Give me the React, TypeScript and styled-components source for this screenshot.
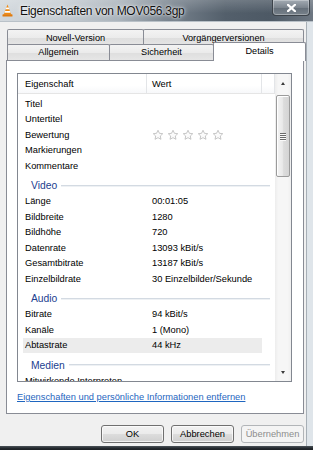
import React from 'react';
import styled, { createGlobalStyle } from 'styled-components';

const GlobalStyle = createGlobalStyle`
  html, body {
    margin: 0;
    padding: 0;
    width: 313px;
    height: 450px;
    overflow: hidden;
    background: #f0f0f0;
  }
  body {
    font-family: 'Liberation Sans', Arial, sans-serif;
    color: #000;
  }
`;

const Window = styled.div`
  width: 313px;
  height: 450px;
  display: flex;
  flex-direction: column;
  background: #f0f0f0;
`;

const TitleBar = styled.div`
  height: 22px;
  flex: none;
  display: flex;
  align-items: flex-start;
  background:
    linear-gradient(180deg, rgba(255, 255, 255, 0.18) 0%, rgba(255, 255, 255, 0) 60%),
    linear-gradient(90deg, #d2d8dd 0%, #c5ccd2 20%, #aab3bb 38%, #75808b 55%, #535f6b 72%, #4d5965 86%, #6d7782 100%);
  box-shadow: inset 0 -1px 0 #b9c1c8;
`;

const AppIcon = styled.svg`
  width: 11px;
  height: 13px;
  margin: 4px 0 0 2px;
  flex: none;
`;

const Caption = styled.div`
  margin: 4px 0 0 7px;
  font-size: 12px;
  letter-spacing: -0.3px;
  line-height: 14px;
  color: #101010;
  text-shadow: 0 0 5px rgba(255, 255, 255, 0.95), 0 0 2px rgba(255, 255, 255, 0.9);
  white-space: nowrap;
`;

const CloseButton = styled.div`
  margin: 0 3px 0 auto;
  width: 38px;
  height: 16px;
  box-sizing: border-box;
  display: flex;
  align-items: center;
  justify-content: center;
  border: 1px solid #3c434a;
  border-top: none;
  border-radius: 0 0 4px 4px;
  background: linear-gradient(180deg, #a3abb3 0%, #7c858e 50%, #66707a 55%, #77818a 100%);
  box-shadow: inset 0 0 0 1px rgba(255, 255, 255, 0.3);
`;

const Body = styled.div`
  flex: 1;
  display: flex;
  flex-direction: column;
  padding: 7px 9px 0 6px;
  box-shadow: inset -6px 0 0 #dfe5ea, inset -7px 0 0 #a7afb6;
`;

const TabRow = styled.div<{ $h: number }>`
  display: flex;
  align-items: flex-end;
  height: ${p => p.$h}px;
  padding-left: 1px;
`;

const Tab = styled.div<{ $w: number; $active?: boolean; $back?: boolean }>`
  width: ${p => p.$w}px;
  height: ${p => (p.$active ? 19 : p.$back ? 17 : 16)}px;
  margin-left: -1px;
  margin-bottom: ${p => (p.$active ? -1 : p.$back ? -1 : 0)}px;
  box-sizing: border-box;
  flex: none;
  display: flex;
  justify-content: center;
  align-items: ${p => (p.$active ? 'flex-start' : 'center')};
  padding-top: ${p => (p.$active ? 3 : 0)}px;
  border: 1px solid #898c95;
  border-bottom: none;
  border-radius: 2px 2px 0 0;
  background: ${p => (p.$active ? '#fff' : 'linear-gradient(180deg, #f3f3f3 0%, #ebebeb 50%, #dedede 51%, #e6e6e6 100%)')};
  font-size: 9.2px;
  line-height: 11px;
  position: relative;
  z-index: ${p => (p.$active ? 2 : 1)};

  &:first-child {
    margin-left: 0;
  }
`;

const Panel = styled.div`
  height: 354px;
  box-sizing: border-box;
  border: 1px solid #898c95;
  background: #fff;
  padding: 12px 11px 0 10px;
  display: flex;
  flex-direction: column;
`;

const List = styled.div`
  height: 309px;
  box-sizing: border-box;
  border: 1px solid #828790;
  display: flex;
  overflow: hidden;
  background: #fff;
`;

const ListMain = styled.div`
  flex: 1;
  display: flex;
  flex-direction: column;
  overflow: hidden;
`;

const Header = styled.div`
  height: 20px;
  flex: none;
  box-sizing: border-box;
  display: flex;
  border-bottom: 1px solid #e5e5e5;
  background: linear-gradient(180deg, #ffffff 0%, #ffffff 60%, #f7f8fa 100%);
  font-size: 9.3px;
`;

const HeaderCell = styled.div<{ $w?: number }>`
  width: ${p => (p.$w ? `${p.$w}px` : 'auto')};
  flex: ${p => (p.$w ? 'none' : '1')};
  box-sizing: border-box;
  display: flex;
  align-items: center;
  padding-left: ${p => (p.$w === 129 ? 7 : 5)}px;
  border-right: 1px solid #e3e5e8;
`;

const Rows = styled.div`
  flex: 1;
  overflow: hidden;
  padding-top: 2px;
  font-size: 9.3px;
`;

const Row = styled.div<{ $hot?: boolean }>`
  height: 15.5px;
  width: 239px;
  margin-left: 5px;
  display: flex;
  align-items: center;
  background: ${p => (p.$hot ? '#ececec' : 'transparent')};
  white-space: nowrap;
`;

const NameCell = styled.div`
  width: 124px;
  flex: none;
  padding-left: 2px;
  box-sizing: border-box;
  overflow: hidden;
`;

const ValueCell = styled.div`
  flex: 1;
  padding-left: 5px;
  display: flex;
  align-items: center;
`;

const GroupHead = styled.div`
  height: 20px;
  width: 247px;
  margin-left: 5px;
  box-sizing: border-box;
  display: flex;
  align-items: center;
  padding: 4px 0 0 8px;
  font-size: 10.3px;
  color: #22408f;
`;

const GroupLine = styled.div`
  flex: 1;
  height: 0;
  margin-left: 4px;
  border-top: 1px solid #d3dae2;
  border-bottom: 1px solid #eef1f4;
`;

const Stars = styled.div`
  display: flex;
  gap: 3px;
`;

const ScrollBar = styled.div`
  width: 16px;
  flex: none;
  display: flex;
  flex-direction: column;
  align-items: center;
  background: linear-gradient(90deg, #ededed 0%, #f6f6f6 20%, #f6f6f6 80%, #eeeeee 100%);
`;

const ArrowButton = styled.div<{ $h: number }>`
  height: ${p => p.$h}px;
  width: 100%;
  flex: none;
  display: flex;
  align-items: center;
  justify-content: center;
`;

const Arrow = styled.div<{ $up?: boolean }>`
  width: 0;
  height: 0;
  border-left: 2.5px solid transparent;
  border-right: 2.5px solid transparent;
  ${p => (p.$up ? 'border-bottom: 3px solid #3a3a3a;' : 'border-top: 3px solid #3a3a3a;')}
`;

const Thumb = styled.div`
  margin-top: 2px;
  width: 14px;
  height: 82px;
  box-sizing: border-box;
  border: 1px solid #9b9b9b;
  border-radius: 2px;
  background: linear-gradient(90deg, #f4f4f4 0%, #e9e9e9 45%, #dcdcdc 55%, #d4d4d4 100%);
  box-shadow: inset 1px 1px 0 #fff;
  display: flex;
  flex-direction: column;
  align-items: center;
  justify-content: center;
  gap: 1px;
`;

const Grip = styled.div`
  width: 6px;
  height: 1px;
  background: #6b6b6b;
  box-shadow: 0 1px 0 #fafafa;
`;

const Track = styled.div`
  flex: 1;
`;

const RemoveLink = styled.a`
  margin-top: 9px;
  font-size: 9.3px;
  line-height: 12px;
  color: #1f66c0;
  text-decoration: underline;
  white-space: nowrap;
  cursor: pointer;
`;

const ButtonBar = styled.div`
  display: flex;
  justify-content: flex-end;
  gap: 7px;
  margin-top: 11px;
`;

const Button = styled.div<{ $disabled?: boolean }>`
  width: 63px;
  height: 18px;
  box-sizing: border-box;
  display: flex;
  align-items: center;
  justify-content: center;
  font-size: 9.3px;
  color: ${p => (p.$disabled ? '#8d8d8d' : '#000')};
  border: 1px solid ${p => (p.$disabled ? '#b2b5b8' : '#707070')};
  border-radius: 3px;
  background: ${p =>
    p.$disabled
      ? '#f4f4f4'
      : 'linear-gradient(180deg, #f2f2f2 0%, #ebebeb 48%, #dddddd 50%, #cfcfcf 100%)'};
  box-shadow: inset 0 0 0 1px ${p => (p.$disabled ? '#f4f4f4' : 'rgba(255,255,255,0.7)')};
`;

const BottomFrame = styled.div`
  height: 4px;
  flex: none;
  background: linear-gradient(180deg, #4b5259 0%, #23282d 60%, #1c2024 100%);
`;

const StarIcon = () => (
  <svg width="12" height="12" viewBox="0 0 24 24">
    <path
      d="M12 2.5l2.9 6.1 6.6.8-4.9 4.6 1.3 6.6L12 17.3l-5.9 3.3 1.3-6.6-4.9-4.6 6.6-.8z"
      fill="#fbfbfb"
      stroke="#b9b9b9"
      strokeWidth="1.6"
      strokeLinejoin="round"
    />
  </svg>
);

type Prop = { name: string; value?: string; stars?: boolean; hot?: boolean };

const groups: { title?: string; rows: Prop[] }[] = [
  {
    rows: [
      { name: 'Titel' },
      { name: 'Untertitel' },
      { name: 'Bewertung', stars: true },
      { name: 'Markierungen' },
      { name: 'Kommentare' },
    ],
  },
  {
    title: 'Video',
    rows: [
      { name: 'Länge', value: '00:01:05' },
      { name: 'Bildbreite', value: '1280' },
      { name: 'Bildhöhe', value: '720' },
      { name: 'Datenrate', value: '13093 kBit/s' },
      { name: 'Gesamtbitrate', value: '13187 kBit/s' },
      { name: 'Einzelbildrate', value: '30 Einzelbilder/Sekunde' },
    ],
  },
  {
    title: 'Audio',
    rows: [
      { name: 'Bitrate', value: '94 kBit/s' },
      { name: 'Kanäle', value: '1 (Mono)' },
      { name: 'Abtastrate', value: '44 kHz', hot: true },
    ],
  },
  {
    title: 'Medien',
    rows: [{ name: 'Mitwirkende Interpreten' }],
  },
];

export default function App() {
  return (
    <Window>
      <GlobalStyle />
      <TitleBar>
        <AppIcon viewBox="0 0 11 13">
          <path d="M5.5 0.5 L9.2 10.5 H1.8 Z" fill="#f08a12" />
          <path d="M4.3 3.6 H6.7 L7.3 5.3 H3.7 Z" fill="#fff" />
          <path d="M3.1 7 H7.9 L8.5 8.7 H2.5 Z" fill="#fff" />
          <rect x="0.5" y="10.3" width="10" height="2.2" rx="0.6" fill="#e07a0c" />
        </AppIcon>
        <Caption>Eigenschaften von MOV056.3gp</Caption>
        <CloseButton>
          <svg width="9" height="8" viewBox="0 0 9 8">
            <path d="M1 0.8 L8 7.2 M8 0.8 L1 7.2" stroke="#fff" strokeWidth="2.2" strokeLinecap="square" />
          </svg>
        </CloseButton>
      </TitleBar>

      <Body>
        <TabRow $h={16}>
          <Tab $w={137} $back>Novell-Version</Tab>
          <Tab $w={161} $back>Vorgängerversionen</Tab>
        </TabRow>
        <TabRow $h={15}>
          <Tab $w={103}>Allgemein</Tab>
          <Tab $w={105}>Sicherheit</Tab>
          <Tab $w={93} $active>Details</Tab>
        </TabRow>

        <Panel>
          <List>
            <ListMain>
              <Header>
                <HeaderCell $w={129}>Eigenschaft</HeaderCell>
                <HeaderCell $w={115}>Wert</HeaderCell>
                <HeaderCell />
              </Header>
              <Rows>
                {groups.map((g, gi) => (
                  <React.Fragment key={gi}>
                    {g.title && (
                      <GroupHead>
                        {g.title}
                        <GroupLine />
                      </GroupHead>
                    )}
                    {g.rows.map(r => (
                      <Row key={r.name} $hot={r.hot}>
                        <NameCell>{r.name}</NameCell>
                        <ValueCell>
                          {r.stars ? (
                            <Stars>
                              {[0, 1, 2, 3, 4].map(i => (
                                <StarIcon key={i} />
                              ))}
                            </Stars>
                          ) : (
                            r.value
                          )}
                        </ValueCell>
                      </Row>
                    ))}
                  </React.Fragment>
                ))}
              </Rows>
            </ListMain>
            <ScrollBar>
              <ArrowButton $h={19}>
                <Arrow $up />
              </ArrowButton>
              <Thumb>
                <Grip />
                <Grip />
                <Grip />
                <Grip />
              </Thumb>
              <Track />
              <ArrowButton $h={18}>
                <Arrow />
              </ArrowButton>
            </ScrollBar>
          </List>
          <RemoveLink>Eigenschaften und persönliche Informationen entfernen</RemoveLink>
        </Panel>

        <ButtonBar>
          <Button>OK</Button>
          <Button>Abbrechen</Button>
          <Button $disabled>Übernehmen</Button>
        </ButtonBar>
      </Body>
      <BottomFrame />
    </Window>
  );
}
